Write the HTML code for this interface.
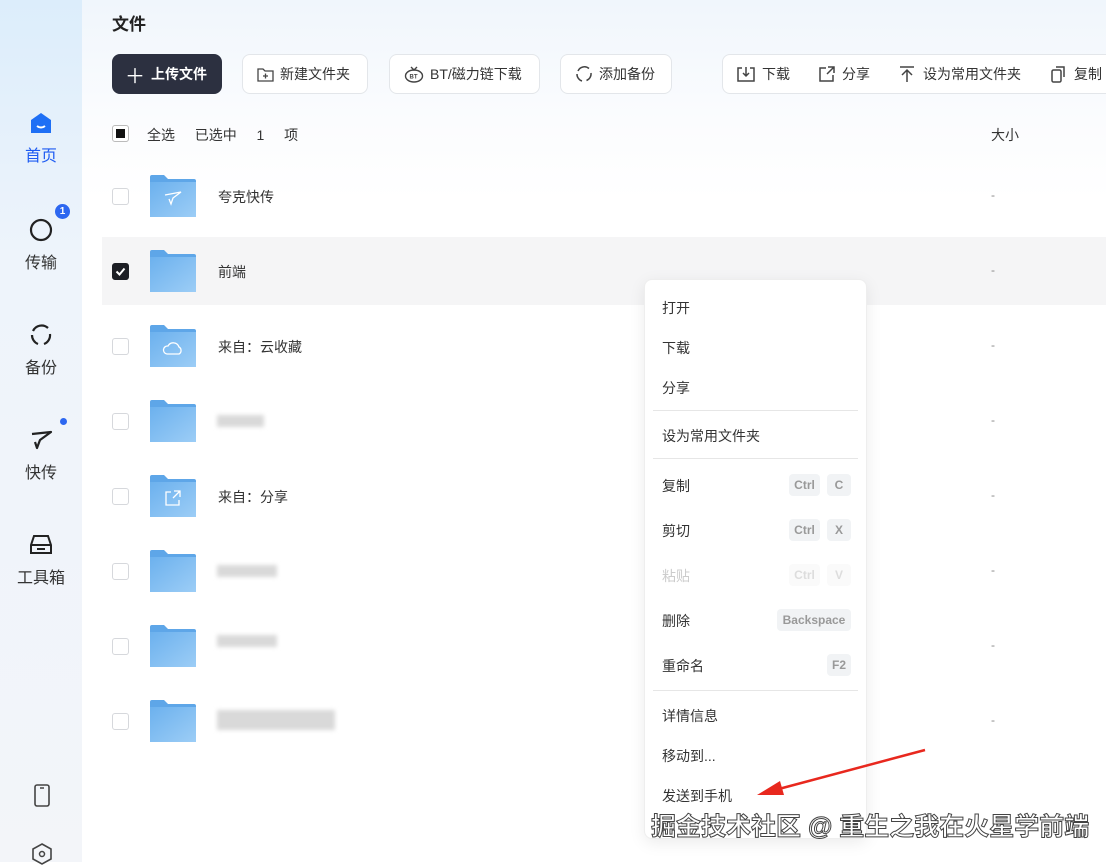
<!DOCTYPE html>
<html><head><meta charset="utf-8"><style>
*{margin:0;padding:0;box-sizing:border-box}
body{width:1106px;height:862px;overflow:hidden;font-family:"Liberation Sans","Noto Sans CJK SC",sans-serif;background:#fff;position:relative;color:#222}
.side{position:absolute;left:0;top:0;width:82px;height:862px;background:linear-gradient(180deg,#dcedfb 0%,#eef4fb 30%,#f3f5f9 100%)}
.main{position:absolute;left:82px;top:0;right:0;bottom:0;background:linear-gradient(180deg,#f0f6fc 0,#fbfcfe 120px,#fff 200px)}
.nav{position:absolute;left:0;width:82px;text-align:center;font-size:16px;color:#333}
.nav svg{display:block;margin:0 auto 6px}
.abs{position:absolute}
.btn{position:absolute;top:54px;height:40px;border:1px solid #e3e6ea;border-radius:8px;background:#fff;font-size:14px;color:#333;display:flex;align-items:center;padding:0 14px;gap:6px;white-space:nowrap}
.cb{position:absolute;left:112px;width:17px;height:17px;border:1px solid #d6d8dc;border-radius:3px;background:#fff}
.row{position:absolute;left:102px;right:0;height:68px}
.fold{position:absolute;left:150px;width:46px;height:42px}
.name{position:absolute;left:218px;font-size:14px;color:#333}
.dash{position:absolute;left:991px;font-size:12px;color:#888}
.blur{position:absolute;background:#d9d9d9;filter:blur(2px);height:12px}
.menu{position:absolute;left:644px;top:279px;width:223px;height:560px;background:#fff;border:1px solid #eee;border-radius:8px;box-shadow:0 4px 16px rgba(0,0,0,.08)}
.mi{position:absolute;left:17px;font-size:14px;color:#333}
.hr{position:absolute;left:8px;right:8px;height:1px;background:#e6e6e6}
.k{position:absolute;height:22px;background:#f1f3f5;border-radius:4px;font-size:12px;font-weight:bold;color:#999;text-align:center;line-height:22px}
</style></head><body>
<div class="side">
 <div class="nav" style="top:112px;color:#1e5cf2"><svg width="24" height="24" viewBox="0 0 24 24"><path d="M12 1 L22 8 V21 H2 V8 Z" fill="#1e6ff5"/><path d="M8 14 q4 3 8 0" stroke="#fff" stroke-width="2" fill="none"/></svg>首页</div>
 <div class="nav" style="top:217px"><svg width="26" height="26" viewBox="0 0 26 26"><circle cx="13" cy="13" r="10" stroke="#222" stroke-width="2.2" fill="none"/></svg>传输</div>
 <div class="abs" style="left:55px;top:204px;width:15px;height:15px;border-radius:50%;background:#2d67f0;color:#fff;font-size:10px;font-weight:bold;text-align:center;line-height:15px">1</div>
 <div class="nav" style="top:322px"><svg width="26" height="26" viewBox="0 0 26 26"><path d="M5 9 A9.5 9.5 0 0 1 20 6 M22 12 A9.5 9.5 0 0 1 16 22 M10 22 A9.5 9.5 0 0 1 4 13" stroke="#222" stroke-width="2.2" fill="none"/></svg>备份</div>
 <div class="nav" style="top:427px"><svg width="26" height="26" viewBox="0 0 26 26"><path d="M4 7 L23 5 L12 13 L9 21 L7 15" stroke="#222" stroke-width="2.2" fill="none" stroke-linejoin="round"/></svg>快传</div>
 <div class="abs" style="left:60px;top:418px;width:7px;height:7px;border-radius:50%;background:#2d67f0"></div>
 <div class="nav" style="top:532px"><svg width="26" height="26" viewBox="0 0 26 26"><path d="M6 4 H20 L23 13 V21 H3 V13 Z M3 13 H23 M9 17 H17" stroke="#222" stroke-width="2" fill="none"/></svg>工具箱</div>
 <svg class="abs" style="left:33px;top:784px" width="18" height="24" viewBox="0 0 18 24"><rect x="2" y="1" width="14" height="21" rx="2" stroke="#444" stroke-width="1.6" fill="none"/><path d="M7 4 H11" stroke="#444" stroke-width="1.5"/></svg>
 <svg class="abs" style="left:32px;top:843px" width="20" height="22" viewBox="0 0 20 22"><path d="M10 1 L19 6 V16 L10 21 L1 16 V6 Z" stroke="#444" stroke-width="1.6" fill="none"/><circle cx="10" cy="11" r="2.5" stroke="#444" stroke-width="1.5" fill="none"/></svg>
</div>
<div class="main"></div>
<div class="abs" style="left:112px;top:10px;font-size:17px;font-weight:bold;color:#222">文件</div>
<div class="btn" style="left:112px;width:110px;background:#2c3040;border-color:#2c3040;color:#fff;font-weight:bold;gap:6px;padding:0 12px"><span style="font-size:20px;font-weight:normal">＋</span>上传文件</div>
<div class="btn" style="left:242px;width:126px"><svg width="17" height="15" viewBox="0 0 17 15"><path d="M1 2 H6 L8 4 H16 V14 H1 Z M8.5 6.5 V11.5 M6 9 H11" stroke="#444" stroke-width="1.3" fill="none"/></svg>新建文件夹</div>
<div class="btn" style="left:389px;width:151px"><svg width="20" height="17" viewBox="0 0 20 17"><ellipse cx="10" cy="10" rx="8.5" ry="6" stroke="#444" stroke-width="1.4" fill="none"/><path d="M7 1 L10 4 L13 1" stroke="#444" stroke-width="1.4" fill="none"/><text x="5.5" y="12.5" font-size="6" font-weight="bold" fill="#444" font-family="Liberation Sans">BT</text></svg>BT/磁力链下载</div>
<div class="btn" style="left:560px;width:112px"><svg width="18" height="18" viewBox="0 0 18 18"><path d="M3 6 A7 7 0 0 1 14 3.5 M16 8 A7 7 0 0 1 11.5 15.5 M7 16 A7 7 0 0 1 2 9" stroke="#444" stroke-width="1.5" fill="none"/></svg>添加备份</div>
<div class="btn" style="left:722px;width:420px;gap:0;padding-left:13px">
 <svg width="20" height="18" viewBox="0 0 20 18"><path d="M6 3 H2 V16 H18 V3 H14 M10 2 V11 M7 8 L10 11 L13 8" stroke="#444" stroke-width="1.5" fill="none"/></svg><span style="margin:0 28px 0 6px">下载</span>
 <svg width="18" height="18" viewBox="0 0 18 18"><path d="M8 3 H2 V16 H15 V10 M10 2 H16 V8 M16 2 L9 9" stroke="#444" stroke-width="1.5" fill="none"/></svg><span style="margin:0 28px 0 6px">分享</span>
 <svg width="18" height="18" viewBox="0 0 18 18"><path d="M2 2 H16 M9 5 V17 M4 10 L9 5 L14 10" stroke="#444" stroke-width="1.5" fill="none"/></svg><span style="margin:0 29px 0 7px">设为常用文件夹</span>
 <svg width="18" height="18" viewBox="0 0 18 18"><rect x="2" y="5" width="9" height="12" rx="1.5" stroke="#444" stroke-width="1.5" fill="none"/><path d="M6 2 H14 V12" stroke="#444" stroke-width="1.5" fill="none"/></svg><span style="margin-left:6px">复制</span>
</div>
<div class="cb" style="top:125px;border-color:#bbb"><div style="margin:3px;width:9px;height:9px;background:#111"></div></div>
<div class="abs" style="left:147px;top:125px;font-size:14px;color:#333;word-spacing:6px">全选&nbsp; 已选中 &nbsp;1 &nbsp;项</div>
<div class="abs" style="left:991px;top:125px;font-size:14px;color:#333">大小</div>
<div class="row" style="top:237px;background:#f5f5f6"></div>

<svg width="0" height="0" style="position:absolute"><defs><linearGradient id="fg" x1="0" y1="0" x2="1" y2="1"><stop offset="0" stop-color="#6cb1ee"/><stop offset="1" stop-color="#9ccdf6"/></linearGradient></defs></svg>

<div class="cb" style="top:188px"></div><svg class="fold" style="top:175px" viewBox="0 0 46 42"><path d="M0 2 Q0 0 2 0 H14 L18 4 H44 Q46 4 46 6 V42 H0 Z" fill="#5ea6e8"/><rect x="0" y="7" width="46" height="35" fill="url(#fg)"/><path d="M15 20 L31 17 L23 23 L21 29 L19 24" stroke="#fff" stroke-width="1.3" fill="none"/></svg><div class="name" style="top:187px">夸克快传</div><div class="dash" style="top:188px">-</div>
<div class="cb" style="top:263px;background:#1d1f25;border-color:#1d1f25"><svg width="15" height="15" viewBox="0 0 15 15"><path d="M3.5 7.5 L6.5 10.5 L11.5 4.5" stroke="#fff" stroke-width="2" fill="none"/></svg></div><svg class="fold" style="top:250px" viewBox="0 0 46 42"><path d="M0 2 Q0 0 2 0 H14 L18 4 H44 Q46 4 46 6 V42 H0 Z" fill="#5ea6e8"/><rect x="0" y="7" width="46" height="35" fill="url(#fg)"/></svg><div class="name" style="top:262px">前端</div><div class="dash" style="top:263px">-</div>
<div class="cb" style="top:338px"></div><svg class="fold" style="top:325px" viewBox="0 0 46 42"><path d="M0 2 Q0 0 2 0 H14 L18 4 H44 Q46 4 46 6 V42 H0 Z" fill="#5ea6e8"/><rect x="0" y="7" width="46" height="35" fill="url(#fg)"/><path d="M17 29 H29 A4 4 0 0 0 29 22 A6 6 0 0 0 18 21 A4 4 0 0 0 17 29 Z" stroke="#fff" stroke-width="1.3" fill="none"/></svg><div class="name" style="top:337px">来自：云收藏</div><div class="dash" style="top:338px">-</div>
<div class="cb" style="top:413px"></div><svg class="fold" style="top:400px" viewBox="0 0 46 42"><path d="M0 2 Q0 0 2 0 H14 L18 4 H44 Q46 4 46 6 V42 H0 Z" fill="#5ea6e8"/><rect x="0" y="7" width="46" height="35" fill="url(#fg)"/></svg><div class="blur" style="left:217px;top:415px;width:47px"></div><div class="dash" style="top:413px">-</div>
<div class="cb" style="top:488px"></div><svg class="fold" style="top:475px" viewBox="0 0 46 42"><path d="M0 2 Q0 0 2 0 H14 L18 4 H44 Q46 4 46 6 V42 H0 Z" fill="#5ea6e8"/><rect x="0" y="7" width="46" height="35" fill="url(#fg)"/><path d="M21 17 H16 V30 H29 V25 M24 16 H30 V22 M30 16 L23 23" stroke="#fff" stroke-width="1.3" fill="none"/></svg><div class="name" style="top:487px">来自：分享</div><div class="dash" style="top:488px">-</div>
<div class="cb" style="top:563px"></div><svg class="fold" style="top:550px" viewBox="0 0 46 42"><path d="M0 2 Q0 0 2 0 H14 L18 4 H44 Q46 4 46 6 V42 H0 Z" fill="#5ea6e8"/><rect x="0" y="7" width="46" height="35" fill="url(#fg)"/></svg><div class="blur" style="left:217px;top:565px;width:60px"></div><div class="dash" style="top:563px">-</div>
<div class="cb" style="top:638px"></div><svg class="fold" style="top:625px" viewBox="0 0 46 42"><path d="M0 2 Q0 0 2 0 H14 L18 4 H44 Q46 4 46 6 V42 H0 Z" fill="#5ea6e8"/><rect x="0" y="7" width="46" height="35" fill="url(#fg)"/></svg><div class="blur" style="left:217px;top:635px;width:60px"></div><div class="dash" style="top:638px">-</div>
<div class="cb" style="top:713px"></div><svg class="fold" style="top:700px" viewBox="0 0 46 42"><path d="M0 2 Q0 0 2 0 H14 L18 4 H44 Q46 4 46 6 V42 H0 Z" fill="#5ea6e8"/><rect x="0" y="7" width="46" height="35" fill="url(#fg)"/></svg><div class="blur" style="left:217px;top:710px;width:118px;height:20px"></div><div class="dash" style="top:713px">-</div>

<div class="menu">
 <div class="mi" style="top:18px">打开</div>
 <div class="mi" style="top:58px">下载</div>
 <div class="mi" style="top:98px">分享</div>
 <div class="hr" style="top:130px"></div>
 <div class="mi" style="top:146px">设为常用文件夹</div>
 <div class="hr" style="top:178px"></div>
 <div class="mi" style="top:196px">复制</div><div class="k" style="left:144px;top:194px;width:31px">Ctrl</div><div class="k" style="left:182px;top:194px;width:24px">C</div>
 <div class="mi" style="top:241px">剪切</div><div class="k" style="left:144px;top:239px;width:31px">Ctrl</div><div class="k" style="left:182px;top:239px;width:24px">X</div>
 <div class="mi" style="top:286px;color:#ccc">粘贴</div><div class="k" style="left:144px;top:284px;width:31px;background:#fafafa;color:#ddd">Ctrl</div><div class="k" style="left:182px;top:284px;width:24px;background:#fafafa;color:#ddd">V</div>
 <div class="mi" style="top:331px">删除</div><div class="k" style="left:132px;top:329px;width:74px">Backspace</div>
 <div class="mi" style="top:376px">重命名</div><div class="k" style="left:182px;top:374px;width:24px">F2</div>
 <div class="hr" style="top:410px"></div>
 <div class="mi" style="top:426px">详情信息</div>
 <div class="mi" style="top:466px">移动到...</div>
 <div class="mi" style="top:506px">发送到手机</div>
</div>
<svg class="abs" style="left:0;top:0" width="1106" height="862"><path d="M925 750 L775 790" stroke="#e8281e" stroke-width="2.5"/><path d="M757 795 L780 781 L784 795 Z" fill="#e8281e"/></svg>
<div class="abs" style="left:651px;top:807px;font-size:25px;color:#fff;-webkit-text-stroke:1px #444;font-weight:bold;white-space:nowrap">掘金技术社区 @ 重生之我在火星学前端</div>
</body></html>
